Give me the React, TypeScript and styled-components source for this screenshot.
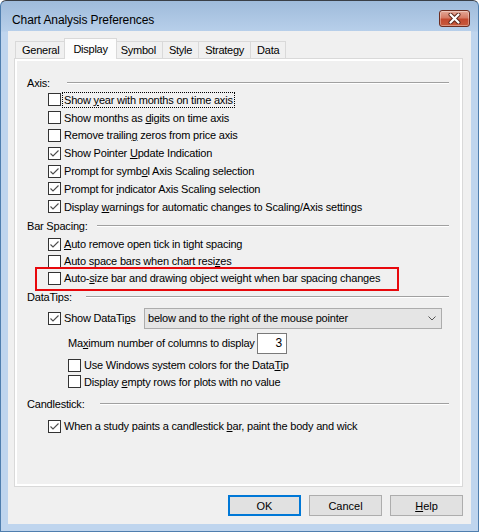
import * as React from "react";
import styled, { createGlobalStyle } from "styled-components";

const GlobalStyle = createGlobalStyle`
  html, body {
    margin: 0;
    padding: 0;
    background: #fff;
  }
  body {
    font-family: "Liberation Sans", Arial, sans-serif;
    color: #000;
  }
`;

const Window = styled.div`
  width: 479px;
  height: 532px;
  box-sizing: border-box;
  border: 1px solid #4f7eae;
  border-top-color: #3a3f47;
  border-radius: 6px 6px 0 0;
  background: linear-gradient(#9fbbdb 0px, #b7cfea 30px, #bfd5ee 31px, #bfd5ee 100%);
  display: flex;
  flex-direction: column;
  overflow: hidden;
`;

const TitleBar = styled.div`
  height: 30px;
  box-sizing: border-box;
  padding: 8px 8px 0 11px;
  display: flex;
  align-items: center;
  justify-content: space-between;
`;

const Title = styled.span`
  font-size: 12px;
  letter-spacing: -0.1px;
`;

const CloseButton = styled.div`
  width: 31px;
  height: 17px;
  box-sizing: border-box;
  margin-top: -4px;
  border: 1px solid #6d2d20;
  border-radius: 3px;
  background: linear-gradient(#e3a898 0%, #d67b65 45%, #c3492f 55%, #c85a3c 100%);
  box-shadow: inset 0 0 0 1px rgba(255, 255, 255, 0.35);
  display: flex;
  align-items: center;
  justify-content: center;
`;

const Client = styled.div`
  margin: 0 7px 7px;
  flex: 1;
  background: #f0f0f0;
  display: flex;
  flex-direction: column;
`;

const TabStrip = styled.div`
  height: 27px;
  padding-left: 7px;
  display: flex;
  align-items: flex-end;
  position: relative;
  z-index: 1;
`;

const Tab = styled.div<{ $active?: boolean }>`
  box-sizing: border-box;
  height: ${(p) => (p.$active ? 21 : 17)}px;
  margin: ${(p) => (p.$active ? "0 -2px -1px -2px" : "0 0 0 -1px")};
  padding: ${(p) => (p.$active ? "0 8px 1px" : "0 6px")};
  border: 1px solid #d9d9d9;
  border-bottom: none;
  background: ${(p) => (p.$active ? "#fcfcfc" : "#f0f0f0")};
  font-size: 11px;
  letter-spacing: -0.25px;
  display: flex;
  align-items: center;
  z-index: ${(p) => (p.$active ? 2 : 1)};
  &:first-child {
    margin-left: 0;
  }
`;

const Panel = styled.div`
  margin-left: 6px;
  width: 449px;
  height: 429px;
  box-sizing: border-box;
  border: 1px solid #d9d9d9;
  box-shadow: inset 0 0 0 2px #fff;
  padding: 15px 13px 0 12px;
  display: flex;
  flex-direction: column;
`;

const SectionHeader = styled.div<{ $h: number }>`
  height: ${(p) => p.$h}px;
  flex: none;
  display: flex;
  align-items: center;
  font-size: 11px;
  letter-spacing: -0.2px;
`;

const Rule = styled.div<{ $gap: number }>`
  flex: 1;
  margin-left: ${(p) => p.$gap}px;
  border-top: 1px solid #a0a0a0;
  border-bottom: 1px solid #fff;
`;

const Row = styled.div<{ $h: number; $indent: number }>`
  height: ${(p) => p.$h}px;
  flex: none;
  padding-left: ${(p) => p.$indent}px;
  display: flex;
  align-items: center;
  position: relative;
  font-size: 11px;
  letter-spacing: -0.2px;
`;

const Box = styled.span`
  width: 13px;
  height: 13px;
  box-sizing: border-box;
  border: 1px solid #333;
  background: #fff;
  flex: none;
  display: flex;
  align-items: center;
  justify-content: center;
  margin-right: 3px;
`;

const Label = styled.span<{ $focused?: boolean }>`
  white-space: nowrap;
  outline: ${(p) => (p.$focused ? "1px dotted #000" : "none")};
  outline-offset: 1px;
`;

const FixedLabel = styled.span`
  width: 189px;
  flex: none;
  white-space: nowrap;
`;

const Highlight = styled.div`
  position: absolute;
  left: 8px;
  top: -3px;
  width: 364px;
  height: 24px;
  box-sizing: border-box;
  border: 2px solid #e8080c;
  pointer-events: none;
`;

const Select = styled.div`
  margin-left: auto;
  margin-right: 7px;
  width: 298px;
  height: 21px;
  box-sizing: border-box;
  border: 1px solid #acacac;
  background: #e5e5e5;
  padding: 0 5px 0 3px;
  display: flex;
  align-items: center;
  justify-content: space-between;
`;

const NumberBox = styled.div`
  width: 30px;
  height: 21px;
  box-sizing: border-box;
  border: 1px solid #7a7a7a;
  background: #fff;
  padding-right: 4px;
  display: flex;
  align-items: center;
  justify-content: flex-end;
  font-size: 12px;
`;

const ButtonRow = styled.div`
  margin-top: 8px;
  padding-right: 8px;
  display: flex;
  justify-content: flex-end;
  gap: 8px;
`;

const Button = styled.div<{ $default?: boolean }>`
  width: 73px;
  height: 21px;
  box-sizing: border-box;
  border: ${(p) => (p.$default ? "2px solid #0078d7" : "1px solid #adadad")};
  background: #e1e1e1;
  font-size: 11px;
  display: flex;
  align-items: center;
  justify-content: center;
`;

function Check({ on }: { on?: boolean }) {
  return (
    <Box>
      {on && (
        <svg width="11" height="11" viewBox="0 0 11 11">
          <polyline points="1.5,5.5 4,8 9.5,2.5" fill="none" stroke="#4d4d4d" strokeWidth="1.1" />
        </svg>
      )}
    </Box>
  );
}

type Opt = { text: React.ReactNode; on?: boolean; focused?: boolean };

const axisOpts: Opt[] = [
  { text: <>Show <u>y</u>ear with months on time axis</>, focused: true },
  { text: <>Show months as <u>d</u>igits on time axis</> },
  { text: <>Remove trailin<u>g</u> zeros from price axis</> },
  { text: <>Show Pointer <u>U</u>pdate Indication</>, on: true },
  { text: <>Prompt for symb<u>o</u>l Axis Scaling selection</>, on: true },
  { text: <>Prompt for <u>i</u>ndicator Axis Scaling selection</>, on: true },
  { text: <>Display <u>w</u>arnings for automatic changes to Scaling/Axis settings</>, on: true },
];

export default function App() {
  return (
    <>
      <GlobalStyle />
      <Window>
        <TitleBar>
          <Title>Chart Analysis Preferences</Title>
          <CloseButton>
            <svg width="13" height="11" viewBox="0 0 13 11">
              <path d="M2.5 1.5 L10.5 9.5 M10.5 1.5 L2.5 9.5" stroke="#5a2418" strokeWidth="4" strokeLinecap="round" />
              <path d="M2.5 1.5 L10.5 9.5 M10.5 1.5 L2.5 9.5" stroke="#fff" strokeWidth="2.2" strokeLinecap="round" />
            </svg>
          </CloseButton>
        </TitleBar>
        <Client>
          <TabStrip>
            <Tab>General</Tab>
            <Tab $active>Display</Tab>
            <Tab>Symbol</Tab>
            <Tab>Style</Tab>
            <Tab>Strategy</Tab>
            <Tab>Data</Tab>
          </TabStrip>
          <Panel>
            <SectionHeader $h={17}>
              Axis:
              <Rule $gap={17} />
            </SectionHeader>
            {axisOpts.map((o, i) => (
              <Row key={i} $h={17.8} $indent={21}>
                <Check on={o.on} />
                <Label $focused={o.focused}>{o.text}</Label>
              </Row>
            ))}

            <SectionHeader $h={20}>
              Bar Spacing:
              <Rule $gap={9} />
            </SectionHeader>
            <Row $h={17} $indent={21}>
              <Check on />
              <Label><u>A</u>uto remove open tick in tight spacing</Label>
            </Row>
            <Row $h={17} $indent={21}>
              <Check />
              <Label>Auto space bars when chart resi<u>z</u>es</Label>
            </Row>
            <Row $h={17} $indent={21}>
              <Check />
              <Label>Auto-<u>s</u>ize bar and drawing object weight when bar spacing changes</Label>
              <Highlight />
            </Row>

            <SectionHeader $h={21}>
              DataTips:
              <Rule $gap={14} />
            </SectionHeader>
            <Row $h={21} $indent={21}>
              <Check on />
              <Label>Show DataTi<u>p</u>s</Label>
              <Select>
                <span>below and to the right of the mouse pointer</span>
                <svg width="8" height="5" viewBox="0 0 8 5">
                  <polyline points="0.5,0.5 4,4 7.5,0.5" fill="none" stroke="#555" strokeWidth="1" />
                </svg>
              </Select>
            </Row>
            <Row $h={29} $indent={41}>
              <FixedLabel>Ma<u>x</u>imum number of columns to display</FixedLabel>
              <NumberBox>3</NumberBox>
            </Row>
            <Row $h={15} $indent={41}>
              <Check />
              <Label>Use Windows system colors for the Data<u>T</u>ip</Label>
            </Row>
            <Row $h={18.8} $indent={41}>
              <Check />
              <Label>Display <u>e</u>mpty rows for plots with no value</Label>
            </Row>

            <SectionHeader $h={25}>
              Candlestick:
              <Rule $gap={15} />
            </SectionHeader>
            <Row $h={19.6} $indent={21}>
              <Check on />
              <Label>When a study paints a candlestick <u>b</u>ar, paint the body and wick</Label>
            </Row>
          </Panel>
          <ButtonRow>
            <Button $default>OK</Button>
            <Button>Cancel</Button>
            <Button><span><u>H</u>elp</span></Button>
          </ButtonRow>
        </Client>
      </Window>
    </>
  );
}
